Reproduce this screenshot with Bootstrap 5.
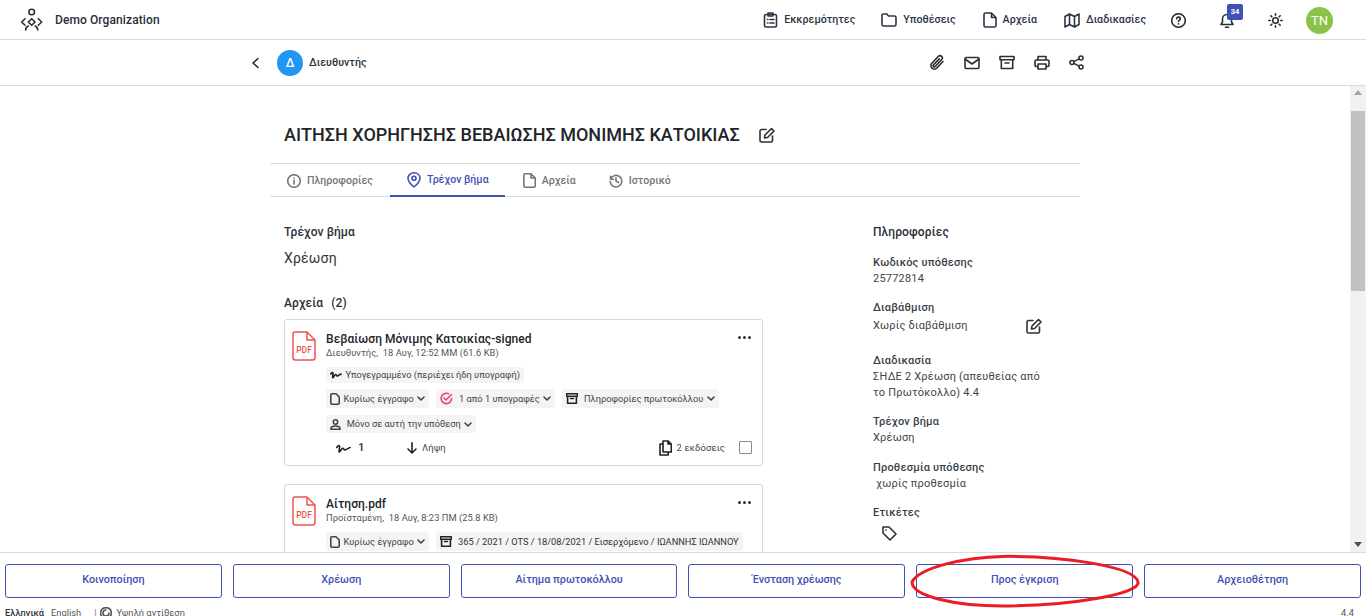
<!DOCTYPE html>
<html lang="el">
<head>
    <meta charset="UTF-8">
    <meta name="viewport" content="width=device-width, initial-scale=1.0">
    <title>Demo Organization</title>
    <link href="https://cdn.jsdelivr.net/npm/bootstrap@5.3.0/dist/css/bootstrap.min.css" rel="stylesheet">
    <style>
        html, body { height: 616px; overflow: hidden; }
        body { font-family: Roboto, "Liberation Sans", sans-serif; font-size: 11px; color: #2b2f38; background: #fff; }
        svg.ico { fill: none; stroke: currentColor; stroke-width: 1.6; stroke-linecap: round; stroke-linejoin: round; flex-shrink: 0; display: block; }
        .app-shell { height: 616px; position: relative; }

        .top-bar { height: 40px; border-bottom: 1px solid #dcdcdc; padding: 0 33px 0 20px; }
        .top-right { padding-top: 2px; }
        .org-name { font-size: 12px; font-weight: 500; margin-left: 11px; letter-spacing: .1px; }
        .top-link { font-size: 10.7px; font-weight: 500; color: #2d3445; text-decoration: none; gap: 6px; }
        .link-a { margin-right: 26px; }
        .link-b { margin-right: 27px; }
        .link-c { margin-right: 27px; }
        .link-d { margin-right: 25px; }
        .help-slot { margin-right: 34px; }
        .bell-slot { position: relative; margin-right: 34px; }
        .bell-count { position: absolute; left: 7px; top: -9px; width: 16px; height: 16px; background: #3f51b5; color: #fff; font-size: 7.5px; font-weight: 700; border-radius: 2px; text-align: center; line-height: 16px; }
        .sun-slot { margin-right: 23px; }
        .user-dot { width: 27px; height: 27px; border-radius: 50%; background: #8bc34a; color: #fff; font-size: 13px; line-height: 27px; text-align: center; }

        .sub-bar { height: 46px; border-bottom: 1px solid #dcdcdc; padding: 0 282px 0 250px; }
        .role-dot { width: 26px; height: 26px; border-radius: 50%; background: #2196f3; color: #fff; font-size: 12px; font-weight: 500; line-height: 26px; text-align: center; margin-left: 16px; margin-right: 6px; }
        .role-name { font-size: 10.7px; font-weight: 500; padding-top: 1px; }
        .sub-icons { gap: 19px; }

        .mid-area { height: 466px; overflow: hidden; }
        .page-col { width: 810px; flex-shrink: 0; }
        .fake-bar { width: 16px; background: #f1f1f1; }
        .bar-thumb { width: 14px; height: 180px; margin: 16px auto 0; background: #c1c1c1; }
        .bar-arrow-up { width: 0; height: 0; margin: 4px auto 0; border: 4px solid transparent; border-top: 0; border-bottom: 5px solid #a3a3a3; }
        .bar-arrow-down { width: 0; height: 0; margin: 0 auto 5px; border: 4px solid transparent; border-bottom: 0; border-top: 5px solid #505050; }

        .title-row { height: 78px; border-bottom: 1px solid #dcdcdc; padding: 20px 0 0 14px; }
        .case-title { font-size: 18px; font-weight: 500; margin: 0 19px 0 0; color: #212529; }
        .tab-row { height: 33px; border-bottom: 1px solid #dcdcdc; padding-left: 17px; }
        .tab-item { height: 33px; gap: 6px; color: #757575; font-size: 10.6px; font-weight: 500; padding: 0 17px 0 0; text-decoration: none; }
        .tab-on { color: #3f51b5; border-bottom: 2px solid #3f51b5; padding: 0 16px 0 17px; }
        .tab-gap { margin-left: 1px; padding-left: 17px; padding-right: 33px; }

        .col-left { width: 603px; padding: 27px 0 0 14px; flex-shrink: 0; }
        .col-right { padding-top: 27px; width: 178px; }
        .sec-head { font-size: 12px; font-weight: 500; line-height: 16px; letter-spacing: .1px; }
        .step-name { font-size: 14px; line-height: 20px; margin-top: 8px; color: #333; letter-spacing: .2px; }
        .files-head { margin-top: 27px; margin-bottom: 8px; }
        .files-head span { margin-left: 5px; }

        .doc-box { width: 479px; border: 1px solid #d8d8d8; border-radius: 3px; padding: 11px 10px 0 7px; position: relative; }
        .box-one { height: 147px; margin-bottom: 18px; }
        .box-two { height: 110px; }
        .doc-name { font-size: 12px; font-weight: 500; line-height: 16px; color: #212529; letter-spacing: .05px; }
        .doc-meta { font-size: 9.3px; line-height: 13px; color: #555; margin-top: -1px; letter-spacing: .05px; }
        .doc-main { margin-left: 10px; min-width: 0; }
        .doc-more { position: absolute; right: 11px; top: 16px; width: 13px; height: 3px; display: flex; justify-content: space-between; }
        .doc-more i { width: 3px; height: 3px; border-radius: 50%; background: #333; display: block; }
        .chip-line { gap: 7px; margin-top: 6px; }
        .chip-first { margin-top: 8px; }
        .chip-third { margin-top: 7px; }
        .info-chip { height: 19px; background: #f4f4f4; border-radius: 3px; font-size: 9.25px; color: #444; padding: 0 4px; gap: 3.5px; white-space: nowrap; }
        .chip-low { height: 16px; }
        .chip-mid { height: 18px; }
        .chip-dark { color: #333; }
        .act-line { position: absolute; left: 51px; right: 10px; top: 120px; height: 16px; font-size: 9.4px; color: #444; }
        .act-sign { width: 71px; gap: 7px; font-size: 11.5px; font-weight: 500; color: #333; }
        .act-get { gap: 5px; letter-spacing: .1px; }
        .act-vers { gap: 5px; margin-left: auto; letter-spacing: .15px; }
        .fake-check { width: 13px; height: 13px; border: 1px solid #8a8a8a; border-radius: 1px; margin: -2px 0 0 14px; }

        .fld-label { font-size: 11px; font-weight: 500; line-height: 16px; color: #3a3f48; letter-spacing: .2px; }
        .fld-val { font-size: 11px; line-height: 16px; color: #444; letter-spacing: .2px; }
        .fld { margin-bottom: 13px; }
        .fld-first { margin-top: 15px; }
        .fld-wide { margin-bottom: 19px; }
        .fld-tall { margin-bottom: 14px; }
        .fld-edit { width: 169px; margin-top: 2px; }
        .tag-slot { margin: 5px 0 0 9px; }

        .action-bar { height: 51px; border-top: 1px solid #dcdcdc; padding: 11px 5px 0; gap: 11px; position: relative; }
        .step-btn { flex: 1 1 0; height: 34px; border: 1px solid #3f51b5; border-radius: 3px; background: #fff; color: #3f51b5; font-size: 10.8px; font-weight: 500; line-height: 1; padding: 0 0 1px; }
        .step-btn:hover { background: #fff; color: #3f51b5; border-color: #3f51b5; }
        .red-ring { position: absolute; left: 909px; top: 1px; pointer-events: none; }

        .foot-line { height: 20px; padding: 0 12px 0 5px; font-size: 9.3px; color: #555; }
        .foot-line b { font-weight: 500; color: #333; margin-right: 7px; }
        .foot-sep { margin: 0 4px 0 13px; color: #777; }
    </style>
</head>
<body>
<div class="app-shell d-flex flex-column">

    <!-- top navigation -->
    <nav class="top-bar d-flex align-items-center flex-shrink-0">
        <svg class="ico" width="24" height="24" viewBox="0 0 24 24" stroke-width="1.3">
            <circle cx="11.7" cy="4" r="2.8"/>
            <path d="M5 10.7 1.7 14 5 17.3M18.3 10.7 21.7 14 18.3 17.3M11.7 10.7 15 14 11.7 17.3 8.3 14ZM5.7 22c0-2 1-3.5 2.6-4M17.7 22c0-2-1-3.5-2.6-4"/>
        </svg>
        <span class="org-name">Demo Organization</span>
        <div class="ms-auto d-flex align-items-center top-right">
            <a class="top-link link-a d-flex align-items-center" href="#">
                <svg class="ico" width="15" height="16" viewBox="0 0 15 16" stroke-width="1.300"><rect x="1.500" y="2.500" width="12" height="12.500" rx="1.500"/><path d="M5 1h5v3H5zM4.500 7.500h.5M7 7.500h4M4.500 11h.5M7 11h4"/></svg>
                Εκκρεμότητες</a>
            <a class="top-link link-b d-flex align-items-center" href="#">
                <svg class="ico" width="16" height="14" viewBox="0 0 16 14" stroke-width="1.300"><path d="M1 2.500C1 1.700 1.600 1 2.400 1h3.400l1.700 2h6c.8 0 1.500.7 1.500 1.500v7c0 .8-.7 1.500-1.500 1.500h-11C1.700 13 1 12.300 1 11.500Z"/></svg>
                Υποθέσεις</a>
            <a class="top-link link-c d-flex align-items-center" href="#">
                <svg class="ico" width="14" height="16" viewBox="0 0 14 16" stroke-width="1.300"><path d="M2.500 1H8.500L13 5.500V13.500c0 .8-.7 1.500-1.500 1.500h-9C1.700 15 1 14.300 1 13.500v-11C1 1.700 1.700 1 2.500 1ZM8.500 1V5.500H13"/></svg>
                Αρχεία</a>
            <a class="top-link link-d d-flex align-items-center" href="#">
                <svg class="ico" width="16" height="15" viewBox="0 0 16 15" stroke-width="1.300"><path d="M1 3.500 5.500 1l5 2.500L15 1v10.500L10.500 14l-5-2.500L1 14ZM5.500 1v10.500M10.500 3.500V14"/></svg>
                Διαδικασίες</a>
            <div class="help-slot">
                <svg class="ico" width="15" height="15" viewBox="0 0 15 15" stroke-width="1.200"><circle cx="7.500" cy="7.500" r="6.800"/><path d="M5.700 5.800c0-1 .8-1.700 1.800-1.700s1.800.7 1.800 1.600c0 1.400-1.800 1.400-1.800 2.800M7.500 10.800v.2"/></svg>
            </div>
            <div class="bell-slot">
                <svg class="ico" width="14" height="16" viewBox="0 0 14 16" stroke-width="1.300"><path d="M7 1.500c-2.500 0-4.500 2-4.500 4.500v3L1 11.500h12L11.500 9V6c0-2.500-2-4.500-4.500-4.500ZM5.500 14.300h3"/></svg>
                <span class="bell-count">34</span>
            </div>
            <div class="sun-slot">
                <svg class="ico" width="15" height="15" viewBox="0 0 15 15" stroke-width="1.100"><circle cx="7.500" cy="7.500" r="2.800"/><path d="M7.500.8v1.500M7.500 12.700v1.500M.8 7.500h1.500M12.700 7.500h1.500M2.800 2.800l1 1M11.200 11.200l1 1M2.800 12.200l1-1M11.200 3.800l1-1"/></svg>
            </div>
            <div class="user-dot">TN</div>
        </div>
    </nav>

    <!-- case header -->
    <div class="sub-bar d-flex align-items-center flex-shrink-0">
        <svg class="ico" width="11" height="12" viewBox="0 0 11 12" stroke-width="1.800"><path d="M8 1.500 3 6l5 4.500"/></svg>
        <div class="role-dot">Δ</div>
        <span class="role-name">Διευθυντής</span>
        <div class="ms-auto d-flex align-items-center sub-icons">
            <svg class="ico" width="16" height="17" viewBox="0 0 16 17" stroke-width="1.400"><path d="M14 7.500 7.800 14a3.400 3.400 0 0 1-5-4.700l6.600-7a2.300 2.300 0 0 1 3.300 3.200l-6.500 7a1.100 1.100 0 0 1-1.700-1.600l5.800-6"/></svg>
            <svg class="ico" width="16" height="14" viewBox="0 0 16 14" stroke-width="1.300"><rect x="1" y="1.500" width="14" height="11" rx="1.300"/><path d="m1 3 7 5 7-5"/></svg>
            <svg class="ico" width="16" height="15" viewBox="0 0 16 15" stroke-width="1.400"><path d="M1 1.500h14v3.300H1zM2.300 4.800V13.500h11.400V4.800M6 8h4"/></svg>
            <svg class="ico" width="16" height="15" viewBox="0 0 16 15" stroke-width="1.400"><path d="M4 5V1.500h8V5M4 11.500H2.300C1.600 11.500 1 10.900 1 10.200V6.300C1 5.600 1.600 5 2.300 5h11.400c.7 0 1.300.6 1.300 1.300v3.900c0 .7-.6 1.300-1.300 1.300H12M4 9h8v5H4z"/></svg>
            <svg class="ico" width="15" height="15" viewBox="0 0 15 15" stroke-width="1.200"><circle cx="3" cy="7.500" r="2"/><circle cx="12" cy="3" r="2"/><circle cx="12" cy="12" r="2"/><path d="m4.800 6.600 5.400-2.700M4.800 8.400l5.400 2.700"/></svg>
        </div>
    </div>

    <!-- scrolling content -->
    <div class="mid-area d-flex flex-shrink-0">
        <div class="flex-grow-1 d-flex justify-content-center overflow-hidden">
            <div class="page-col">
                <div class="title-row d-flex align-items-center">
                    <h1 class="case-title">ΑΙΤΗΣΗ ΧΟΡΗΓΗΣΗΣ ΒΕΒΑΙΩΣΗΣ ΜΟΝΙΜΗΣ ΚΑΤΟΙΚΙΑΣ</h1>
                    <svg class="ico" width="16" height="16" viewBox="0 0 16 16" stroke-width="1.300"><path d="M13.500 9v4.500c0 .8-.7 1.500-1.500 1.500H2.500C1.700 15 1 14.300 1 13.500V4c0-.8.7-1.500 1.500-1.500H7M5.500 11l.5-3 6.500-6.500 2.500 2.500L8.500 10.500Z"/></svg>
                </div>
                <div class="tab-row d-flex">
                    <a class="tab-item d-flex align-items-center" href="#">
                        <svg class="ico" width="14" height="14" viewBox="0 0 14 14" stroke-width="1.200"><circle cx="7" cy="7" r="6.300"/><path d="M7 6.300v3.800M7 4v.2"/></svg>
                        Πληροφορίες</a>
                    <a class="tab-item tab-on d-flex align-items-center" href="#">
                        <svg class="ico" width="14" height="16" viewBox="0 0 14 16" stroke-width="1.400"><path d="M7 15C4 12.500 1 9.500 1 6.200 1 3 3.700.8 7 .8s6 2.200 6 5.400C13 9.500 10 12.500 7 15Z"/><circle cx="7" cy="6.200" r="2"/></svg>
                        Τρέχον βήμα</a>
                    <a class="tab-item tab-gap d-flex align-items-center" href="#">
                        <svg class="ico" width="13" height="15" viewBox="0 0 13 15" stroke-width="1.300"><path d="M2.300.8H8L12.300 5v7.700c0 .8-.7 1.500-1.500 1.500H2.300c-.8 0-1.500-.7-1.500-1.500V2.300C.8 1.500 1.500.8 2.300.8ZM8 .8V5h4.300"/></svg>
                        Αρχεία</a>
                    <a class="tab-item d-flex align-items-center" href="#">
                        <svg class="ico" width="14" height="14" viewBox="0 0 14 14" stroke-width="1.200"><path d="M1.500 2.200v3h3M1.600 5A5.800 5.800 0 1 1 1.200 7.500M7 3.800V7l2.500 1.500"/></svg>
                        Ιστορικό</a>
                </div>

                <div class="d-flex">
                    <div class="col-left">
                        <div class="sec-head">Τρέχον βήμα</div>
                        <div class="step-name">Χρέωση</div>
                        <div class="sec-head files-head">Αρχεία <span>(2)</span></div>

                        <div class="doc-box box-one d-flex">
                            <svg width="24" height="30" viewBox="0 0 24 30" class="flex-shrink-0" fill="none" stroke="#ef5350" stroke-width="1.500" stroke-linejoin="round">
                                <path d="M3 1h12l8 8v17.500c0 1.400-1.100 2.500-2.500 2.500h-17C2.100 29 1 27.900 1 26.500V3c0-1.100.9-2 2-2ZM15 1v8h8"/>
                                <text x="12" y="22" text-anchor="middle" fill="#ef5350" stroke="none" font-family="Roboto, sans-serif" font-size="8.500" font-weight="500">PDF</text>
                            </svg>
                            <div class="doc-main">
                                <div class="doc-name">Βεβαίωση Μόνιμης Κατοικίας-signed</div>
                                <div class="doc-meta">Διευθυντής, &nbsp;18 Αυγ, 12:52 ΜΜ (61.6 KB)</div>
                                <div class="d-flex chip-line chip-first">
                                    <span class="info-chip chip-low d-flex align-items-center">
                                        <svg class="ico" width="12" height="8" viewBox="0 0 12 8" stroke-width="1.100" color="#222"><path d="M.8 3c.8-1.500 2-2 2.200-1 .3 1.500-1 4.500-.3 4.800C3.500 7 4.500 3.500 5.500 3.500s.7 1.500 1.700 1.500 2-1.500 4-2"/></svg>
                                        Υπογεγραμμένο (περιέχει ήδη υπογραφή)</span>
                                </div>
                                <div class="d-flex chip-line">
                                    <span class="info-chip d-flex align-items-center">
                                        <svg class="ico" width="10" height="12" viewBox="0 0 10 12" stroke-width="1.100"><path d="M1.800.8H6L9.200 4v6c0 .7-.5 1.200-1.200 1.200H1.800C1.100 11.200.8 10.700.8 10V1.800C.8 1.200 1.200.8 1.800.8Z"/></svg>
                                        Κυρίως έγγραφο
                                        <svg class="ico" width="8" height="5" viewBox="0 0 8 5" stroke-width="1.100"><path d="m1 1 3 3 3-3"/></svg></span>
                                    <span class="info-chip d-flex align-items-center">
                                        <svg class="ico" width="13" height="13" viewBox="0 0 13 13" stroke-width="1.100" color="#ec407a"><path d="M11.600 6.500A5.200 5.200 0 1 1 8.500 1.700M4 6l2 2 5.500-5.500"/></svg>
                                        &nbsp;1 από 1 υπογραφές
                                        <svg class="ico" width="8" height="5" viewBox="0 0 8 5" stroke-width="1.100"><path d="m1 1 3 3 3-3"/></svg></span>
                                    <span class="info-chip d-flex align-items-center">
                                        <svg class="ico" width="12" height="11" viewBox="0 0 12 11" stroke-width="1.100" color="#222"><path d="M.6.800h10.800v2.400H.6zM1.600 3.200v7h8.800v-7M4.500 5.500h3"/></svg>
                                        &nbsp;Πληροφορίες πρωτοκόλλου
                                        <svg class="ico" width="8" height="5" viewBox="0 0 8 5" stroke-width="1.100"><path d="m1 1 3 3 3-3"/></svg></span>
                                </div>
                                <div class="d-flex chip-line chip-third">
                                    <span class="info-chip chip-mid d-flex align-items-center">
                                        <svg class="ico" width="11" height="11" viewBox="0 0 11 11" stroke-width="1"><circle cx="5.500" cy="3" r="2.200"/><path d="M1 10.300V9.500C1 8 2.500 7 5.500 7s4.500 1 4.500 2.500v.8Z"/></svg>
                                        &nbsp;Μόνο σε αυτή την υπόθεση
                                        <svg class="ico" width="8" height="5" viewBox="0 0 8 5" stroke-width="1.100"><path d="m1 1 3 3 3-3"/></svg></span>
                                </div>
                            </div>
                            <span class="doc-more"><i></i><i></i><i></i></span>
                            <div class="act-line d-flex align-items-center">
                                <span class="act-sign d-flex align-items-center">
                                    <svg class="ico" width="15" height="9" viewBox="0 0 15 9" stroke-width="1.200" color="#222"><path d="M.8 3.500c1-1.800 2.500-2.500 2.800-1.200.4 1.700-1.200 5.300-.4 5.700 1 .4 2.300-3.800 3.600-3.800s.8 1.800 2.100 1.800 2.600-1.800 5.300-2.500"/></svg>
                                    1</span>
                                <span class="act-get d-flex align-items-center">
                                    <svg class="ico" width="10" height="12" viewBox="0 0 10 12" stroke-width="1.300" color="#222"><path d="M5 .8v10M1 7l4 4 4-4"/></svg>
                                    Λήψη</span>
                                <span class="act-vers d-flex align-items-center">
                                    <svg class="ico" width="13" height="16" viewBox="0 0 13 16" stroke-width="1.200" color="#222"><path d="M4 1h5.200L12.300 4v8H4zM9 1v3h3.300M4 4H1v11h8.200v-3"/></svg>
                                    2 εκδόσεις</span>
                                <span class="fake-check"></span>
                            </div>
                        </div>

                        <div class="doc-box box-two d-flex">
                            <svg width="24" height="30" viewBox="0 0 24 30" class="flex-shrink-0" fill="none" stroke="#ef5350" stroke-width="1.500" stroke-linejoin="round">
                                <path d="M3 1h12l8 8v17.500c0 1.400-1.100 2.500-2.500 2.500h-17C2.100 29 1 27.900 1 26.500V3c0-1.100.9-2 2-2ZM15 1v8h8"/>
                                <text x="12" y="22" text-anchor="middle" fill="#ef5350" stroke="none" font-family="Roboto, sans-serif" font-size="8.500" font-weight="500">PDF</text>
                            </svg>
                            <div class="doc-main">
                                <div class="doc-name">Αίτηση.pdf</div>
                                <div class="doc-meta">Προϊσταμένη, &nbsp;18 Αυγ, 8:23 ΠΜ (25.8 KB)</div>
                                <div class="d-flex chip-line chip-first">
                                    <span class="info-chip d-flex align-items-center">
                                        <svg class="ico" width="10" height="12" viewBox="0 0 10 12" stroke-width="1.100"><path d="M1.800.8H6L9.200 4v6c0 .7-.5 1.200-1.200 1.200H1.800C1.100 11.200.8 10.700.8 10V1.800C.8 1.200 1.200.8 1.800.8Z"/></svg>
                                        Κυρίως έγγραφο
                                        <svg class="ico" width="8" height="5" viewBox="0 0 8 5" stroke-width="1.100"><path d="m1 1 3 3 3-3"/></svg></span>
                                    <span class="info-chip chip-dark d-flex align-items-center">
                                        <svg class="ico" width="12" height="11" viewBox="0 0 12 11" stroke-width="1.100" color="#222"><path d="M.6.800h10.800v2.400H.6zM1.600 3.200v7h8.800v-7M4.500 5.500h3"/></svg>
                                        &nbsp;365 / 2021 / OTS / 18/08/2021 / Εισερχόμενο / ΙΩΑΝΝΗΣ ΙΩΑΝΝΟΥ</span>
                                </div>
                            </div>
                            <span class="doc-more"><i></i><i></i><i></i></span>
                        </div>
                    </div>

                    <div class="col-right">
                        <div class="sec-head">Πληροφορίες</div>
                        <div class="fld fld-first">
                            <div class="fld-label">Κωδικός υπόθεσης</div>
                            <div class="fld-val">25772814</div>
                        </div>
                        <div class="fld fld-wide">
                            <div class="fld-label">Διαβάθμιση</div>
                            <div class="fld-val fld-edit d-flex align-items-center justify-content-between">
                                Χωρίς διαβάθμιση
                                <svg class="ico" width="16" height="16" viewBox="0 0 16 16" stroke-width="1.300" color="#333"><path d="M13.500 9v4.500c0 .8-.7 1.500-1.500 1.500H2.500C1.700 15 1 14.300 1 13.500V4c0-.8.7-1.500 1.500-1.500H7M5.500 11l.5-3 6.500-6.500 2.500 2.500L8.500 10.500Z"/></svg>
                            </div>
                        </div>
                        <div class="fld">
                            <div class="fld-label">Διαδικασία</div>
                            <div class="fld-val">ΣΗΔΕ 2 Χρέωση (απευθείας από<br>το Πρωτόκολλο) 4.4</div>
                        </div>
                        <div class="fld fld-tall">
                            <div class="fld-label">Τρέχον βήμα</div>
                            <div class="fld-val">Χρέωση</div>
                        </div>
                        <div class="fld">
                            <div class="fld-label">Προθεσμία υπόθεσης</div>
                            <div class="fld-val">&nbsp;χωρίς προθεσμία</div>
                        </div>
                        <div class="fld">
                            <div class="fld-label">Ετικέτες</div>
                            <div class="tag-slot">
                                <svg class="ico" width="15" height="15" viewBox="0 0 15 15" stroke-width="1.300"><path d="M1 1h6l7 7-6 6-7-7ZM4 4v.2"/></svg>
                            </div>
                        </div>
                    </div>
                </div>
            </div>
        </div>
        <div class="fake-bar d-flex flex-column flex-shrink-0">
            <div class="bar-arrow-up"></div>
            <div class="bar-thumb"></div>
            <div class="bar-arrow-down mt-auto"></div>
        </div>
    </div>

    <!-- workflow actions -->
    <div class="action-bar d-flex flex-shrink-0">
        <button class="btn step-btn" type="button">Κοινοποίηση</button>
        <button class="btn step-btn" type="button">Χρέωση</button>
        <button class="btn step-btn" type="button">Αίτημα πρωτοκόλλου</button>
        <button class="btn step-btn" type="button">Ένσταση χρέωσης</button>
        <button class="btn step-btn" type="button">Προς έγκριση</button>
        <button class="btn step-btn" type="button">Αρχειοθέτηση</button>
        <svg class="red-ring" width="234" height="56" viewBox="0 0 234 56" fill="none" stroke="#ed1c24" stroke-width="3">
            <path d="M3 28C10 14 55 3 94 2.400c60-.6 132 10 135 25.600C232 40 160 52 94 52 45 52 3 42 3 28Z"/>
        </svg>
    </div>

    <div class="foot-line d-flex align-items-center flex-shrink-0">
        <b>Ελληνικά</b>
        <span>English</span>
        <span class="foot-sep">|</span>
        <svg class="ico me-1" width="12" height="12" viewBox="0 0 12 12" stroke-width="1"><circle cx="6" cy="6" r="5.400"/><path d="M6 3a3 3 0 1 0 3 3"/></svg>
        <span>Υψηλή αντίθεση</span>
        <span class="ms-auto">4.4</span>
    </div>
</div>
<script src="https://cdn.jsdelivr.net/npm/bootstrap@5.3.0/dist/js/bootstrap.bundle.min.js"></script>
</body>
</html>
